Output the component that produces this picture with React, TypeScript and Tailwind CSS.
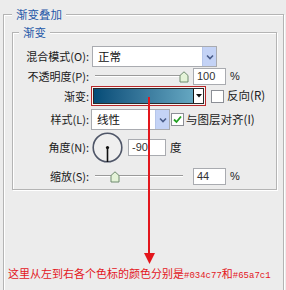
import React from 'react'

const CJK = "font-['Noto_Sans_CJK_SC',sans-serif]"

function Chevron() {
  return (
    <div className="w-[14px] h-full bg-[#c4d3f6] border-l border-[#b6c6ea] flex items-center justify-center">
      <svg width="8" height="6" viewBox="0 0 8 6">
        <path d="M1 1.5 L4 4.5 L7 1.5" fill="none" stroke="#4a5d8a" strokeWidth="1.6" />
      </svg>
    </div>
  )
}

function Slider({ pos }: { pos: number }) {
  return (
    <div className="relative w-[98px] h-full">
      <div className="absolute left-[3px] top-[7px] w-[88px] h-[2px] border-t border-[#9a9a9a] border-b border-b-white" />
      <svg
        className="absolute top-[3px]"
        style={{ left: pos - 5 }}
        width="10"
        height="12"
        viewBox="0 0 10 12"
      >
        <path d="M1 4.5 L5 0.8 L9 4.5 L9 11 L1 11 Z" fill="#e4f3d8" stroke="#6f8a6f" strokeWidth="1" />
      </svg>
    </div>
  )
}

function NumBox({ value, w }: { value: string; w: string }) {
  return (
    <div className={`${w} h-[17px] bg-white border border-[#a9abb0] flex items-center pl-[3px] text-[11px] text-[#333] font-['Liberation_Sans',sans-serif]`}>
      {value}
    </div>
  )
}

function Check({ checked }: { checked?: boolean }) {
  return (
    <div className="w-[13px] h-[13px] bg-white border border-[#8c8f96] flex items-center justify-center">
      {checked && (
        <svg width="9" height="9" viewBox="0 0 9 9">
          <path d="M1 4.5 L3.5 7 L8 1.5" fill="none" stroke="#22a022" strokeWidth="1.8" />
        </svg>
      )}
    </div>
  )
}

export default function App() {
  const label = 'w-[70px] text-right text-[11px] text-[#1a1a1a] leading-none'
  return (
    <div className={`relative w-[286px] h-[290px] overflow-hidden bg-[#ececec] pt-[6px] ${CJK}`}>
      {/* 渐变叠加 */}
      <fieldset className="ml-[3px] w-[281px] h-[320px] border border-[#b4b4b4] pl-[8px] pr-[6px] shadow-[inset_1px_1px_0_#fff,1px_1px_0_#fff]">
        <legend className="px-[4px] bg-[#ececec] text-[11.5px] leading-[16px] text-[#1f58a8]">渐变叠加</legend>

        <fieldset className="mt-[2px] border border-[#b4b4b4] pl-[6px] pb-[4px] shadow-[inset_1px_1px_0_#fff,1px_1px_0_#fff]">
          <legend className="px-[4px] bg-[#ececec] text-[11.5px] leading-[16px] text-[#1f58a8]">渐变</legend>

          <div className="flex flex-col">
            {/* 混合模式 */}
            <div className="flex items-center h-[21px] mt-[6px]">
              <span className={label}>混合模式(O):</span>
              <div className="ml-[3px] w-[125px] h-full bg-white border border-[#a9abb0] flex items-center">
                <span className="flex-1 pl-[5px] text-[11.5px] text-[#111]">正常</span>
                <Chevron />
              </div>
            </div>

            {/* 不透明度 */}
            <div className="flex items-center h-[17px] mt-[1px]">
              <span className={label}>不透明度(P):</span>
              <div className="ml-[3px] h-full">
                <Slider pos={92} />
              </div>
              <div className="ml-[3px]"><NumBox value="100" w="w-[33px]" /></div>
              <span className="ml-[4px] text-[11px] text-[#222] font-['Liberation_Sans',sans-serif]">%</span>
            </div>

            {/* 渐变 */}
            <div className="flex items-center h-[20px] mt-[1px]">
              <span className={label}>渐变:</span>
              <div className="ml-[2px] w-[115px] h-full border border-[#b8282a] p-[1px] bg-[#f4f4f4]">
                <div className="w-full h-full border border-[#2a2a2a] flex">
                  <div className="flex-1 bg-gradient-to-r from-[#034c77] to-[#65a7c1]" />
                  <div className="w-[10px] bg-white border-l border-[#111] flex items-center justify-center">
                    <svg width="6" height="4" viewBox="0 0 6 4">
                      <path d="M0 0 L6 0 L3 3.5 Z" fill="#111" />
                    </svg>
                  </div>
                </div>
              </div>
              <div className="ml-[5px]"><Check /></div>
              <span className="ml-[3px] text-[11.5px] text-[#1a1a1a]">反向(R)</span>
            </div>

            {/* 样式 */}
            <div className="flex items-center h-[21px] mt-[3px]">
              <span className={label}>样式(L):</span>
              <div className="ml-[2px] w-[79px] h-full bg-white border border-[#a9abb0] flex items-center">
                <span className="flex-1 pl-[5px] text-[11.5px] text-[#111]">线性</span>
                <Chevron />
              </div>
              <div className="ml-[1px]"><Check checked /></div>
              <span className="ml-[2px] text-[11.5px] text-[#1a1a1a]">与图层对齐(I)</span>
            </div>

            {/* 角度 */}
            <div className="flex items-center h-[31px] mt-[2px]">
              <span className={label}>角度(N):</span>
              <svg className="ml-[3px]" width="31" height="31" viewBox="0 0 31 31">
                <circle cx="15.5" cy="15.5" r="14.3" fill="#efefef" stroke="#4f5668" strokeWidth="1.6" />
                <line x1="15.5" y1="15.5" x2="15.5" y2="30" stroke="#111" strokeWidth="1.6" />
                <circle cx="15.5" cy="15.5" r="1.6" fill="#111" />
              </svg>
              <div className="ml-[5px]"><NumBox value="-90" w="w-[38px]" /></div>
              <span className="ml-[4px] text-[11.5px] text-[#1a1a1a]">度</span>
            </div>

            {/* 缩放 */}
            <div className="flex items-center h-[17px] mt-[5px]">
              <span className={label}>缩放(S):</span>
              <div className="ml-[3px] h-full">
                <Slider pos={23} />
              </div>
              <div className="ml-[3px]"><NumBox value="44" w="w-[33px]" /></div>
              <span className="ml-[4px] text-[11px] text-[#222] font-['Liberation_Sans',sans-serif]">%</span>
            </div>
          </div>
        </fieldset>
      </fieldset>

      {/* annotation over the screenshot */}
      <div className="absolute left-[148px] top-[97px] w-[2px] h-[158px] bg-[#e3161c]" />
      <svg className="absolute left-[144px] top-[253px]" width="11" height="11" viewBox="0 0 11 11">
        <path d="M0 0 L11 0 L5.5 11 Z" fill="#e3161c" />
      </svg>
      <p className="absolute left-[8px] top-[267px] whitespace-nowrap text-[11px] leading-[12px] text-[#e3161c]">
        这里从左到右各个色标的颜色分别是
        <span className="font-['Liberation_Mono',monospace] text-[9px]">#034c77</span>
        和
        <span className="font-['Liberation_Mono',monospace] text-[9px]">#65a7c1</span>
      </p>
    </div>
  )
}
